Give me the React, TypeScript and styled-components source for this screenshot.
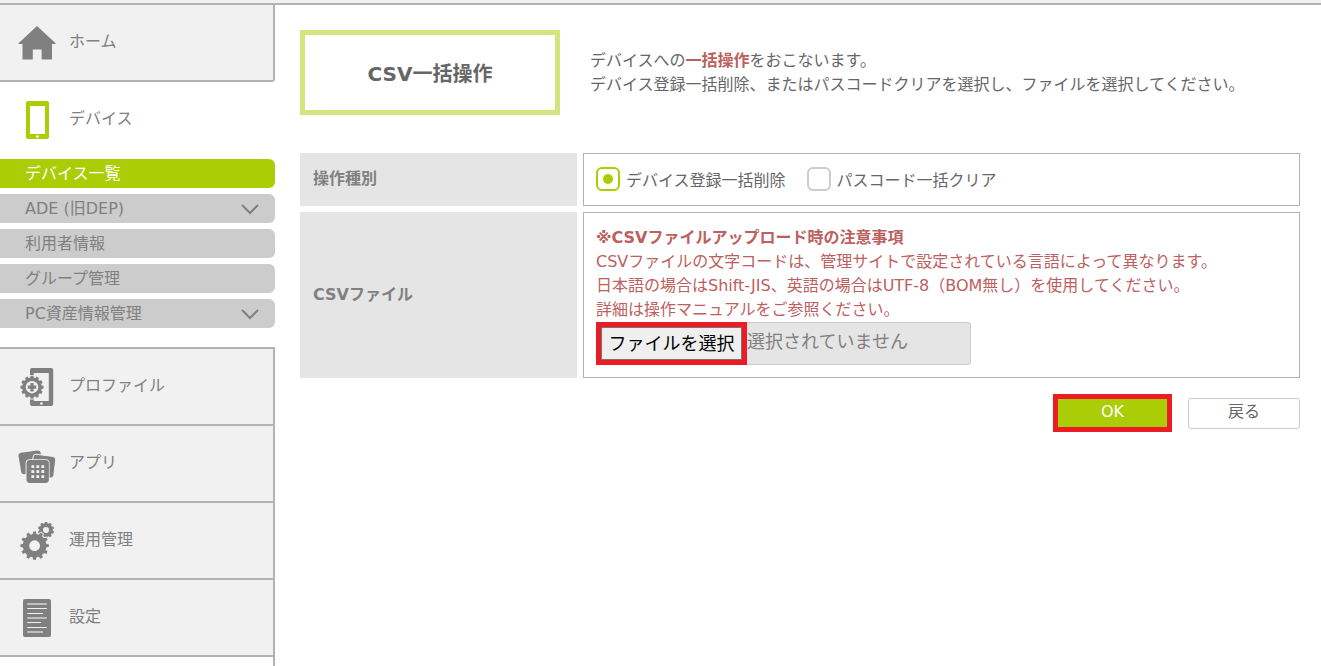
import React, { useState } from "react";
import styled, { createGlobalStyle, css } from "styled-components";

const color = {
  line: "#b2b2b2",
  panel: "#f1f1f1",
  pill: "#cccccc",
  head: "#e5e5e5",
  green: "#aacd06",
  paleGreen: "#d4e57f",
  muted: "#808080",
  text: "#666666",
  notice: "#bc6060",
  frame: "#ed1c24",
};

const GlobalStyle = createGlobalStyle`
  *, *::before, *::after { box-sizing: border-box; }
  body {
    margin: 0;
    background: #fff;
    color: ${color.text};
    font-family: "DejaVu Sans", "Noto Sans CJK JP", sans-serif;
    font-size: 16px;
    line-height: 24px;
  }
  button, input { font: inherit; }
  a { color: inherit; text-decoration: none; }
`;

const Page = styled.div`
  display: flex;
  flex-direction: column;
  min-height: 100vh;
`;

const TopBar = styled.header`
  height: 5px;
  background: ${color.panel};
  border-bottom: 2px solid ${color.line};
`;

const Body = styled.div`
  display: flex;
  flex: 1;
`;

const Sidebar = styled.nav`
  display: flex;
  flex-direction: column;
  flex: 0 0 275px;
`;

const MenuLink = styled.a<{ $open?: boolean; $first?: boolean }>`
  display: flex;
  align-items: center;
  gap: 13px;
  padding: 19px 18px 18px;
  color: ${color.muted};
  ${(p) =>
    p.$open
      ? css`
          padding-bottom: 20px;
        `
      : css`
          background: ${color.panel};
          border-right: 2px solid ${color.line};
          border-bottom: 2px solid ${color.line};
        `}
  ${(p) => p.$first && css`border-bottom-right-radius: 3px;`}
`;

const MenuText = styled.span`
  padding-bottom: 2px;
`;

const MenuIcon = styled.svg`
  flex: none;
  width: 38px;
  height: 38px;
  fill: ${color.muted};
`;

const SubMenu = styled.ul`
  display: flex;
  flex-direction: column;
  gap: 6px;
  margin: 0 0 19px;
  padding: 0;
  list-style: none;
`;

const SubLink = styled.a<{ $active?: boolean }>`
  display: flex;
  align-items: center;
  justify-content: space-between;
  height: 29px;
  padding: 0 16px 0 25px;
  border-radius: 0 6px 6px 0;
  background: ${(p) => (p.$active ? color.green : color.pill)};
  color: ${(p) => (p.$active ? "#fff" : color.muted)};
`;

const Chevron = styled.svg`
  width: 18px;
  height: 12px;
  fill: none;
  stroke: ${color.muted};
  stroke-width: 2;
`;

const LowerMenu = styled.div`
  display: flex;
  flex-direction: column;
  flex: 1;
  border-top: 2px solid ${color.line};
`;

const MenuRest = styled.div`
  flex: 1;
  border-right: 2px solid ${color.line};
`;

const Main = styled.main`
  flex: 1;
  min-width: 0;
  padding: 25px 21px 25px 25px;
`;

const Intro = styled.div`
  display: flex;
  align-items: center;
  gap: 30px;
  margin-bottom: 38px;
`;

const Title = styled.h1`
  display: flex;
  align-items: center;
  justify-content: center;
  flex: 0 0 260px;
  height: 85px;
  margin: 0;
  padding-top: 2px;
  border: 5px solid ${color.paleGreen};
  font-size: 20px;
  font-weight: bold;
`;

const Lead = styled.p`
  margin: 0;
`;

const Strong = styled.strong`
  color: ${color.notice};
`;

const Form = styled.form`
  display: flex;
  flex-direction: column;
  gap: 6px;
`;

const Row = styled.div`
  display: grid;
  grid-template-columns: 277px minmax(0, 1fr);
  gap: 6px;
`;

const RowHead = styled.div`
  display: flex;
  align-items: center;
  padding: 0 13px 1px;
  background: ${color.head};
  color: ${color.muted};
  font-weight: bold;
`;

const RowCell = styled.div`
  padding: 13px 12px 12px;
  border: 1px solid ${color.line};
`;

const Choices = styled.div`
  display: flex;
  gap: 21px;
`;

const Choice = styled.label`
  display: flex;
  align-items: flex-start;
  gap: 6px;
`;

const ChoiceText = styled.span`
  padding-top: 2px;
`;

const Radio = styled.input`
  appearance: none;
  display: grid;
  place-items: center;
  width: 24px;
  height: 24px;
  margin: 0;
  border: 2px solid ${color.pill};
  border-radius: 6px;
  background: #fff;
  &:checked {
    border-color: ${color.green};
  }
  &:checked::before {
    content: "";
    width: 10px;
    height: 10px;
    border-radius: 50%;
    background: ${color.green};
  }
`;

const Notice = styled.p`
  margin: 0;
  color: ${color.notice};
`;

const FileBox = styled.label`
  display: flex;
  width: 375px;
  max-width: 100%;
  height: 43px;
  border-radius: 4px;
  background: ${color.head};
  box-shadow: inset 0 0 0 1px ${color.pill};
  color: ${color.muted};
  font-size: 18px;
`;

const FileInput = styled.input`
  position: absolute;
  width: 1px;
  height: 1px;
  opacity: 0;
`;

const FileButton = styled.span`
  display: flex;
  align-items: center;
  justify-content: center;
  width: 151px;
  border: 5px solid ${color.frame};
  background: #efefef;
  box-shadow: inset 0 0 0 1px #767676;
  color: #000;
`;

const FileName = styled.span`
  padding-top: 8px;
`;

const Actions = styled.div`
  display: flex;
  align-items: center;
  justify-content: flex-end;
  gap: 16px;
  margin-top: 10px;
`;

const Button = styled.button<{ $primary?: boolean }>`
  padding: 0 0 2px;
  ${(p) =>
    p.$primary
      ? css`
          width: 119px;
          height: 38px;
          border: 5px solid ${color.frame};
          background: ${color.green};
          color: #fff;
        `
      : css`
          width: 112px;
          height: 31px;
          border: 1px solid ${color.pill};
          border-radius: 3px;
          background: #fff;
          color: ${color.text};
        `}
`;

// Outline of a gear with flat teeth around a centre point.
function gear(cx: number, cy: number, outer: number, inner: number, teeth: number) {
  const step = (Math.PI * 2) / teeth;
  const points: string[] = [];
  for (let i = 0; i < teeth; i++) {
    const a = i * step - Math.PI / 2;
    const corners: [number, number][] = [
      [inner, -0.34],
      [outer, -0.22],
      [outer, 0.22],
      [inner, 0.34],
    ];
    corners.forEach(([r, k]) => {
      const t = a + k * step;
      points.push(`${(cx + r * Math.cos(t)).toFixed(2)} ${(cy + r * Math.sin(t)).toFixed(2)}`);
    });
  }
  return `M${points.join("L")}Z`;
}

function hole(cx: number, cy: number, r: number) {
  return `M${cx - r} ${cy}a${r} ${r} 0 1 0 ${2 * r} 0a${r} ${r} 0 1 0 ${-2 * r} 0Z`;
}

const HomeIcon = () => (
  <MenuIcon viewBox="0 0 38 38" aria-hidden="true">
    <path d="M19 2 L37.6 19.2 Q38 20 37 20 H34 V35.5 H23.6 V25.4 H14.8 V35.5 H4.5 V20 H1 Q0 20 .5 19.2Z" />
  </MenuIcon>
);

const DeviceIcon = () => (
  <MenuIcon viewBox="0 0 38 38" aria-hidden="true">
    <rect x="8" y="0" width="23" height="38" rx="2" fill={color.green} />
    <rect x="12" y="5" width="15" height="28" fill="#fff" />
    <circle cx="19.4" cy="35.6" r="1.4" fill="#fff" />
  </MenuIcon>
);

const ProfileIcon = () => (
  <MenuIcon viewBox="0 0 38 38" aria-hidden="true">
    <rect x="12" y="0" width="23.2" height="38" rx="2" />
    <rect x="15.8" y="5" width="15" height="28" fill={color.panel} />
    <circle cx="23.4" cy="35.5" r="1.3" fill={color.panel} />
    <path d={gear(14, 19.2, 11.6, 9.8, 12)} stroke={color.panel} strokeWidth="1.6" />
    <path d={gear(14, 19.2, 11.6, 9.8, 12)} />
    <circle cx="14" cy="19.2" r="6.2" fill={color.panel} />
    <path d="M12.4 15h3.2v2.6h2.6v3.2h-2.6v2.6h-3.2v-2.6h-2.6v-3.2h2.6z" />
  </MenuIcon>
);

const AppsIcon = () => (
  <MenuIcon viewBox="0 0 38 38" aria-hidden="true">
    <path d="M3 7.8 L19.5 5.4 Q22 5.2 22.6 7.6 L26 28 L5.5 29.2 Q3.6 29 3.2 27 L.5 10.8 Q.3 8.3 3 7.8Z" />
    <path
      d="M18 9.2 L34.8 11.4 Q38 12 37.7 15 L35.8 30.5 Q35.3 33.2 32.5 33 L14 30 L15 12 Q15.4 9 18 9.2Z"
      stroke={color.panel}
      strokeWidth="1"
    />
    <rect x="7.6" y="14.2" width="24" height="25" rx="4" fill={color.panel} />
    <rect x="8.5" y="15.1" width="22.4" height="22.8" rx="3.4" />
    {[20.2, 25.2, 30.2].map((y) =>
      [13.4, 18.4, 23.4].map((x) => (
        <rect key={`${x}-${y}`} x={x} y={y} width="2.8" height="2.8" fill={color.panel} />
      )),
    )}
  </MenuIcon>
);

const OperationIcon = () => (
  <MenuIcon viewBox="0 0 38 38" aria-hidden="true">
    <path fillRule="evenodd" d={gear(28, 8, 8.2, 6.8, 10) + hole(28, 8, 3)} />
    <path d={gear(16.6, 23.7, 14.8, 12.2, 12)} stroke={color.panel} strokeWidth="1" />
    <circle cx="16.6" cy="23.7" r="5.4" fill={color.panel} />
  </MenuIcon>
);

const SettingsIcon = () => (
  <MenuIcon viewBox="0 0 38 38" aria-hidden="true">
    <rect x="5" y="0" width="28" height="38" rx="2" />
    <path d="M9.2 5H28.8M9.2 19H28.8M9.2 33H25" stroke="#c0c0c0" strokeWidth="2" />
    <path d="M9.2 9.5H28.8M9.2 14.5H25M9.2 23.5H23M9.2 28.5H28.8" stroke={color.panel} strokeWidth="1.2" />
  </MenuIcon>
);

const subItems = [
  { label: "デバイス一覧", active: true },
  { label: "ADE (旧DEP)", expandable: true },
  { label: "利用者情報" },
  { label: "グループ管理" },
  { label: "PC資産情報管理", expandable: true },
];

const lowerItems = [
  { label: "プロファイル", Icon: ProfileIcon },
  { label: "アプリ", Icon: AppsIcon },
  { label: "運用管理", Icon: OperationIcon },
  { label: "設定", Icon: SettingsIcon },
];

const operations = ["デバイス登録一括削除", "パスコード一括クリア"];

export default function App() {
  const [operation, setOperation] = useState(operations[0]);
  const [fileName, setFileName] = useState("");

  return (
    <Page>
      <GlobalStyle />
      <TopBar />
      <Body>
        <Sidebar>
          <MenuLink href="#home" $first>
            <HomeIcon />
            <MenuText>ホーム</MenuText>
          </MenuLink>
          <MenuLink href="#device" $open>
            <DeviceIcon />
            <MenuText>デバイス</MenuText>
          </MenuLink>
          <SubMenu>
            {subItems.map((item) => (
              <li key={item.label}>
                <SubLink href="#device" $active={item.active}>
                  {item.label}
                  {item.expandable && (
                    <Chevron viewBox="0 0 18 12" aria-hidden="true">
                      <path d="M1 2l8 8 8-8" />
                    </Chevron>
                  )}
                </SubLink>
              </li>
            ))}
          </SubMenu>
          <LowerMenu>
            {lowerItems.map(({ label, Icon }) => (
              <MenuLink key={label} href="#menu">
                <Icon />
                <MenuText>{label}</MenuText>
              </MenuLink>
            ))}
            <MenuRest />
          </LowerMenu>
        </Sidebar>
        <Main>
          <Intro>
            <Title>CSV一括操作</Title>
            <Lead>
              デバイスへの<Strong>一括操作</Strong>をおこないます。
              <br />
              デバイス登録一括削除、またはパスコードクリアを選択し、ファイルを選択してください。
            </Lead>
          </Intro>
          <Form onSubmit={(e) => e.preventDefault()}>
            <Row role="radiogroup" aria-labelledby="operation-head">
              <RowHead id="operation-head">操作種別</RowHead>
              <RowCell>
                <Choices>
                  {operations.map((name) => (
                    <Choice key={name}>
                      <Radio
                        type="radio"
                        name="operation"
                        checked={operation === name}
                        onChange={() => setOperation(name)}
                      />
                      <ChoiceText>{name}</ChoiceText>
                    </Choice>
                  ))}
                </Choices>
              </RowCell>
            </Row>
            <Row>
              <RowHead>CSVファイル</RowHead>
              <RowCell>
                <Notice>
                  <Strong>※CSVファイルアップロード時の注意事項</Strong>
                  <br />
                  CSVファイルの文字コードは、管理サイトで設定されている言語によって異なります。
                  <br />
                  日本語の場合はShift-JIS、英語の場合はUTF-8（BOM無し）を使用してください。
                  <br />
                  詳細は操作マニュアルをご参照ください。
                </Notice>
                <FileBox>
                  <FileInput
                    type="file"
                    accept=".csv"
                    onChange={(e) => setFileName(e.target.files?.[0]?.name ?? "")}
                  />
                  <FileButton>ファイルを選択</FileButton>
                  <FileName>{fileName || "選択されていません"}</FileName>
                </FileBox>
              </RowCell>
            </Row>
            <Actions>
              <Button type="submit" $primary>
                OK
              </Button>
              <Button type="button">戻る</Button>
            </Actions>
          </Form>
        </Main>
      </Body>
    </Page>
  );
}
